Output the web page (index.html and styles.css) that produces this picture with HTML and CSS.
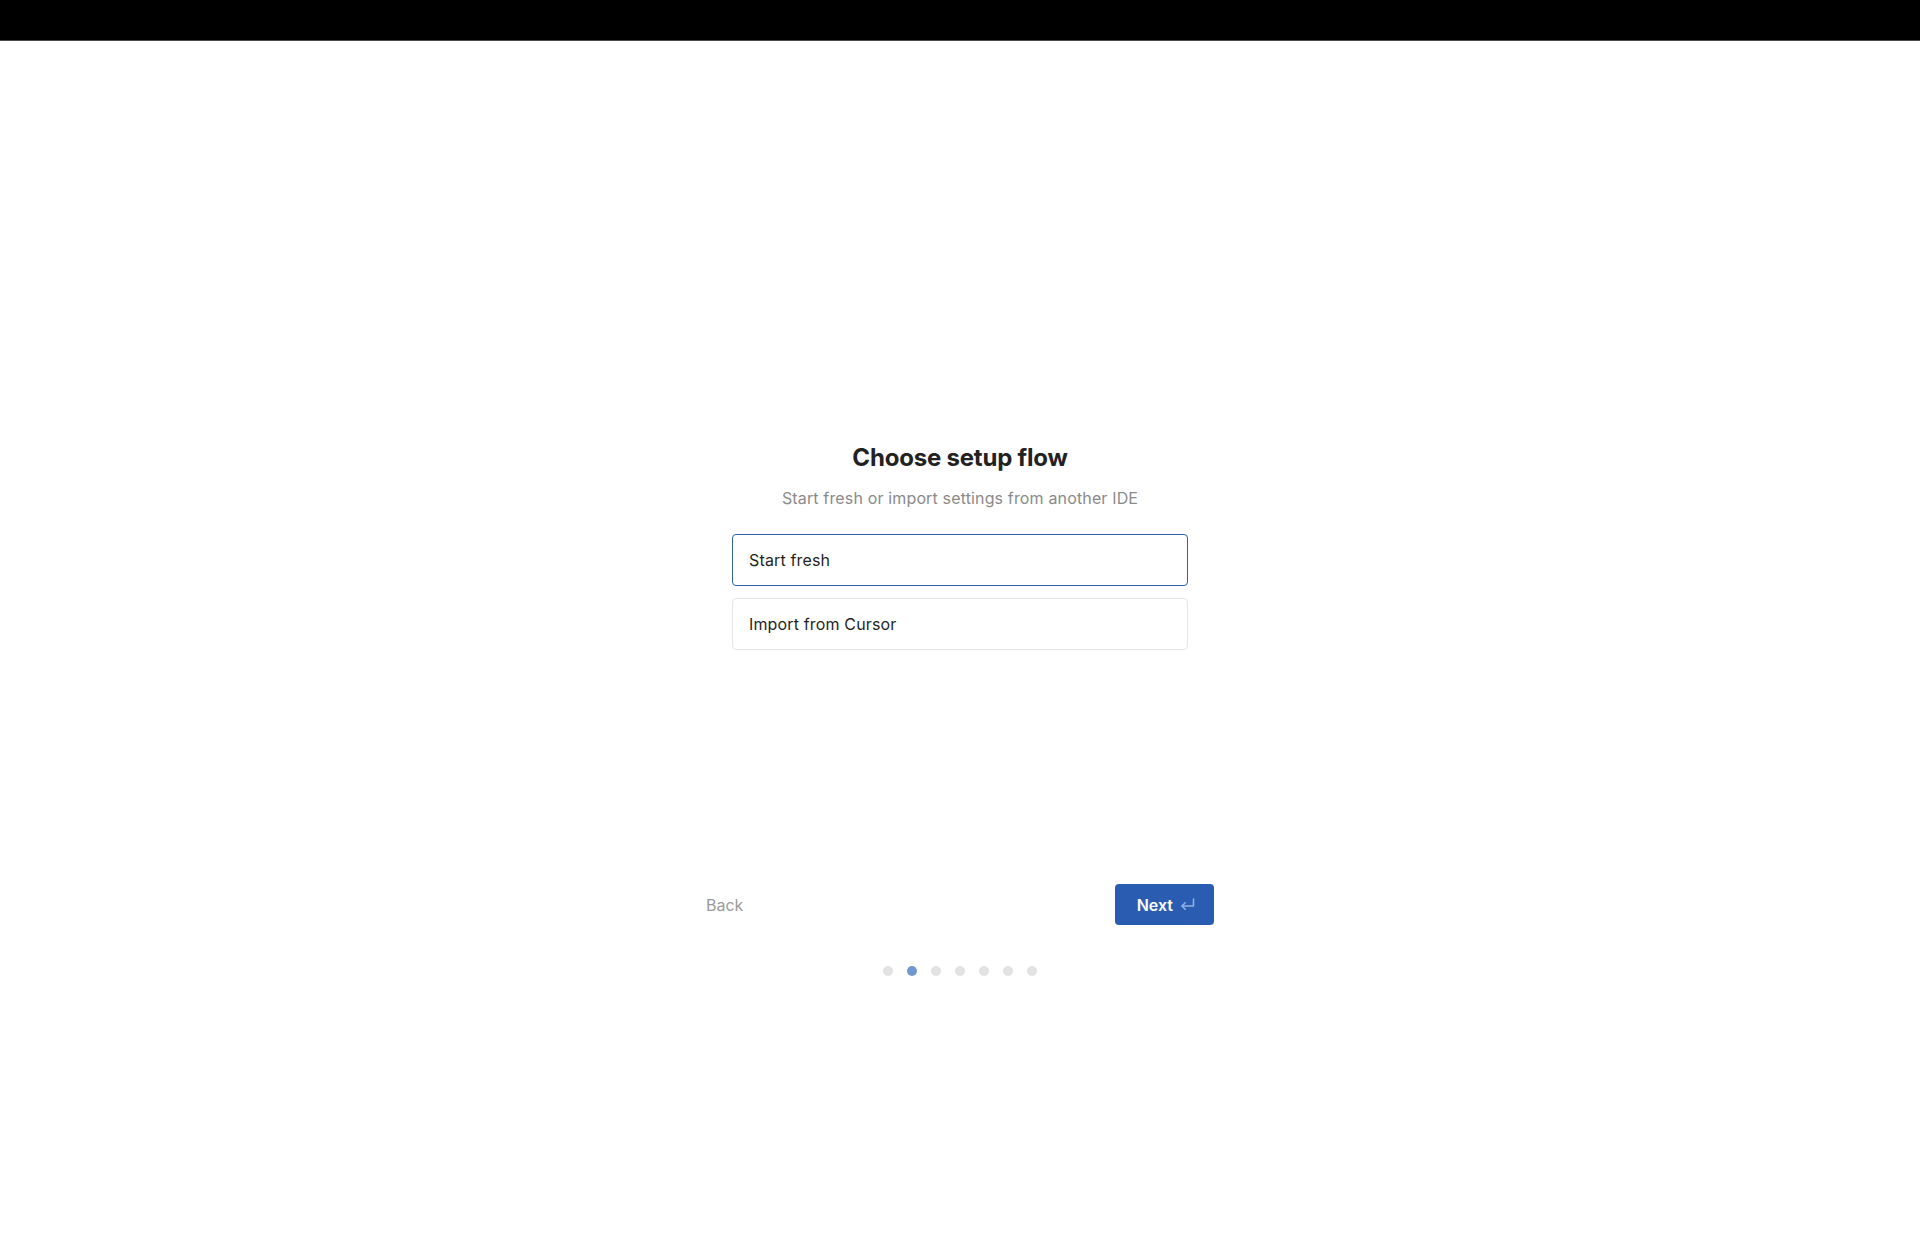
FILE: index.html
```html
<!DOCTYPE html>
<html lang="en">
<head>
<meta charset="utf-8">
<title>Choose setup flow</title>
<link rel="stylesheet" href="styles.css">
</head>
<body>
<div class="topbar"></div>
<main class="main">
  <h1 class="title">Choose setup flow</h1>
  <p class="subtitle">Start fresh or import settings from another IDE</p>
  <div class="options">
    <button class="option selected">Start fresh</button>
    <button class="option">Import from Cursor</button>
  </div>
  <div class="footer">
    <button class="back">Back</button>
    <button class="next">Next
      <svg class="enter" width="15" height="13" viewBox="0 0 15 13" fill="none" stroke="currentColor" stroke-width="1.5" stroke-linecap="round" stroke-linejoin="round">
        <path d="M13.5 1 V8 H2"/>
        <path d="M5.2 4.8 L2 8 L5.2 11.2"/>
      </svg>
    </button>
  </div>
  <div class="dots">
    <span class="dot"></span>
    <span class="dot active"></span>
    <span class="dot"></span>
    <span class="dot"></span>
    <span class="dot"></span>
    <span class="dot"></span>
    <span class="dot"></span>
  </div>
</main>
</body>
</html>
```

FILE: styles.css
```css
* { box-sizing: border-box; }
html, body { margin: 0; padding: 0; background: #ffffff; }
body {
  font-family: Inter, "Noto Sans", "Liberation Sans", sans-serif;
  color: #1f1f1f;
  height: 1247px;
  overflow: hidden;
}
.topbar {
  height: 41px;
  background: #000;
  border-bottom: 1px solid #4a4a4a;
}
.main {
  display: flex;
  flex-direction: column;
  align-items: center;
  padding-top: 401px;
}
.title {
  margin: 0;
  font-size: 24px;
  line-height: 32px;
  font-weight: 700;
  color: #222;
  letter-spacing: -0.2px;
}
.subtitle {
  margin: 12px 0 0;
  font-size: 16px;
  line-height: 24px;
  color: #8a8a8a;
  letter-spacing: 0.15px;
}
.options {
  margin-top: 24px;
  width: 456px;
  display: flex;
  flex-direction: column;
  gap: 12px;
}
.option {
  height: 52px;
  border: 1px solid #e6e6e6;
  border-radius: 4px;
  background: #fff;
  text-align: left;
  padding: 0 0 0 16px;
  font-family: inherit;
  font-size: 16px;
  letter-spacing: 0.15px;
  color: #1f1f1f;
}
.option.selected { border-color: #2f62a8; }
.footer {
  margin-top: 234px;
  width: 508px;
  display: flex;
  justify-content: space-between;
  align-items: center;
}
.back {
  border: 0;
  background: none;
  padding: 0;
  font-family: inherit;
  font-size: 16px;
  color: #9a9a9a;
}
.next {
  height: 41px;
  padding: 0 19px 0 22px;
  display: flex;
  align-items: center;
  gap: 7px;
  border: 0;
  border-radius: 4px;
  background: #2a5db2;
  color: #fff;
  font-family: inherit;
  font-size: 16px;
  font-weight: 600;
}
.enter { color: #93b2e6; }
.dots {
  margin-top: 41px;
  display: flex;
  gap: 14px;
}
.dot {
  width: 10px;
  height: 10px;
  border-radius: 50%;
  background: #e2e2e2;
}
.dot.active { background: #6f98cf; }
```
